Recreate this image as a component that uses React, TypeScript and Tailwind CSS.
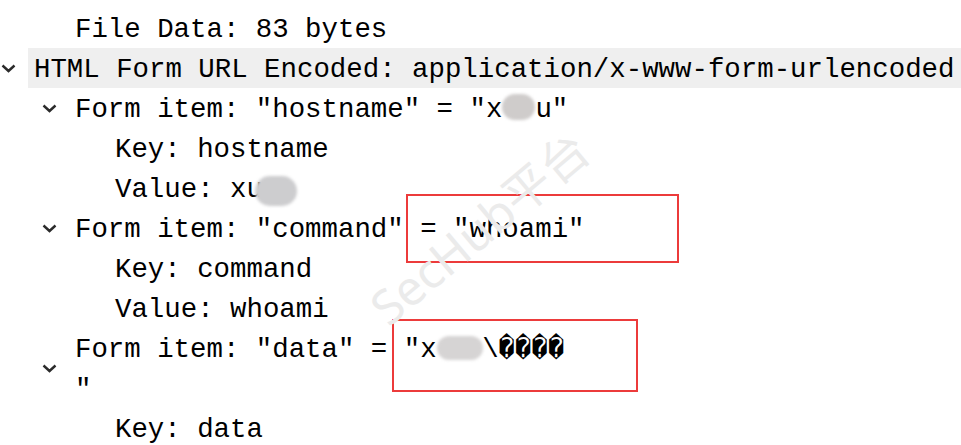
import React from "react";

type RowProps = {
  level: number;
  arrow?: boolean;
  selected?: boolean;
  children: React.ReactNode;
};

const INDENT = ["pl-0", "pl-[41px]", "pl-[81px]"];

const Chevron = () => (
  <svg width="15" height="9" viewBox="0 0 15 9" className="ml-[1px] mt-[1px]">
    <path d="M1.5 1.5 L7.5 7 L13.5 1.5" fill="none" stroke="#2b2b2b" strokeWidth="2.4" />
  </svg>
);

const Row = ({ level, arrow, selected, children }: RowProps) => (
  <div className={`flex items-stretch ${INDENT[level]}`}>
    <div className="w-[28px] shrink-0 flex items-center">{arrow && <Chevron />}</div>
    <div className={`flex-1 pl-[6px] leading-[40px] whitespace-pre ${selected ? "bg-[#efefef]" : ""}`}>
      <div className="relative top-[2px]">{children}</div>
    </div>
  </div>
);

const Blob = ({ className }: { className: string }) => (
  <span className={`inline-block align-middle rounded-full blur-[1.5px] ${className}`} />
);

const App = () => {
  return (
    <div className="relative w-[961px] h-[445px] overflow-hidden bg-white pt-[8px] text-black font-['Liberation_Mono',monospace] text-[27.4px]">
      <Row level={1}>File Data: 83 bytes</Row>
      <Row level={0} arrow selected>
        HTML Form URL Encoded: application/x-www-form-urlencoded
      </Row>
      <Row level={1} arrow>
        Form item: "hostname" = "x
        <Blob className="w-[33px] h-[26px] -mt-[6px] bg-[#cfcccb]" />
        u"
      </Row>
      <Row level={2}>Key: hostname</Row>
      <Row level={2}>
        Value: xu
        <Blob className="w-[42px] h-[30px] -ml-[8px] mt-[2px] bg-[#cdcdcf]" />
      </Row>
      <Row level={1} arrow>
        Form item: "command" = "whoami"
      </Row>
      <Row level={2}>Key: command</Row>
      <Row level={2}>Value: whoami</Row>
      <Row level={1} arrow>
        <div>
          Form item: "data" = "x
          <Blob className="w-[46px] h-[24px] -mt-[4px] bg-[#d6d4d4]" />
          <span className="-ml-[0.5px]">\����</span>
        </div>
        <div>"</div>
      </Row>
      <Row level={2}>Key: data</Row>

      <div className="absolute left-[406px] top-[194px] w-[273px] h-[69px] border-2 border-[#ec3b3b]" />
      <div className="absolute left-[392px] top-[319px] w-[246px] h-[73px] border-2 border-[#ec3b3b]" />

      <div className="absolute left-[346px] top-[204px] origin-center -rotate-[40deg] text-[48px] leading-none text-[#ebebeb] font-['Noto_Sans','Noto_Sans_CJK_SC',sans-serif] whitespace-nowrap pointer-events-none">
        SecHub平台
      </div>
    </div>
  );
};

export default App;
